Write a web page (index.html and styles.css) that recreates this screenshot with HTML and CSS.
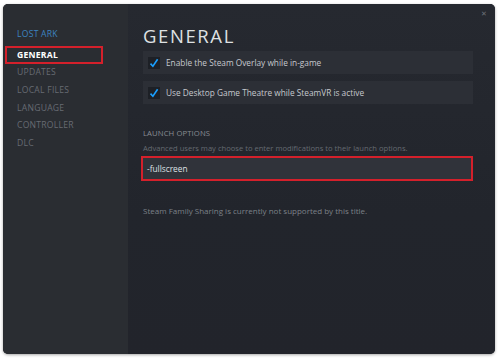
FILE: index.html
```html
<html>
<head>
    <title>Properties</title>
    <meta charset="UTF-8" name="viewport" content="width=device-width, initial-scale=1">
    <link rel="stylesheet" href="styles.css">
</head>

<body>
    <div class="window">
        <div class="sidebar">
            <p class="game">LOST ARK</p>
            <p class="nav active">GENERAL</p>
            <p class="nav">UPDATES</p>
            <p class="nav">LOCAL FILES</p>
            <p class="nav">LANGUAGE</p>
            <p class="nav">CONTROLLER</p>
            <p class="nav">DLC</p>
        </div>
        <div class="main">
            <h1>GENERAL</h1>
            <div class="option">
                <span class="check">
                    <svg width="10" height="10" viewBox="0 0 10 10"><path d="M1.5 5.6 L3.9 8.2 L8.6 1.3" fill="none" stroke="#1a9fff" stroke-width="1.6"/></svg>
                </span>
                Enable the Steam Overlay while in-game
            </div>
            <div class="option">
                <span class="check">
                    <svg width="10" height="10" viewBox="0 0 10 10"><path d="M1.5 5.6 L3.9 8.2 L8.6 1.3" fill="none" stroke="#1a9fff" stroke-width="1.6"/></svg>
                </span>
                Use Desktop Game Theatre while SteamVR is active
            </div>
            <h2>LAUNCH OPTIONS</h2>
            <p class="hint">Advanced users may choose to enter modifications to their launch options.</p>
            <div class="launch">-fullscreen</div>
            <p class="note">Steam Family Sharing is currently not supported by this title.</p>
        </div>
        <span class="close">&#x2715;</span>
    </div>
</body>
</html>
```

FILE: styles.css
```css
html, body {
    margin: 0;
    padding: 0;
    background-color: #ffffff;
    font-family: "Open Sans", "Noto Sans", sans-serif;
}

body {
    padding: 4px 5px 4px 3px;
}

.window {
    position: relative;
    display: flex;
    height: 350px;
    border-radius: 5px;
    overflow: hidden;
    background-color: #24272e;
    box-shadow: 0 1px 3px rgba(0, 0, 0, 0.35);
}

.sidebar {
    width: 125px;
    flex-shrink: 0;
    padding-top: 22px;
    padding-left: 2px;
    box-sizing: border-box;
    background-color: #2a2d32;
}

.sidebar p {
    margin: 0;
    height: 17.8px;
    line-height: 17.8px;
    padding-left: 12px;
    font-size: 8.6px;
    letter-spacing: 0.25px;
    color: #676b72;
}

.sidebar .game {
    height: 18px;
    color: #3d84c0;
    margin-bottom: 2px;
}

.sidebar .active {
    width: 98px;
    height: 18px;
    box-sizing: border-box;
    border: 2px solid #d4202b;
    padding-left: 10px;
    line-height: 14px;
    color: #ffffff;
    font-weight: bold;
}

.main {
    flex: 1;
    padding: 21px 22px 0 15px;
    background: linear-gradient(180deg, #262930 0%, #22252c 60%, #22242b 100%);
}

h1 {
    margin: 0 0 4px 0;
    font-size: 18.5px;
    line-height: 22px;
    font-weight: normal;
    letter-spacing: 1.6px;
    color: #dfe1e3;
}

.option {
    display: flex;
    align-items: center;
    height: 23px;
    margin-bottom: 7px;
    padding-left: 5px;
    background-color: #2c2f36;
    font-size: 8.3px;
    color: #c6c9ce;
}

.check {
    display: flex;
    align-items: center;
    justify-content: center;
    width: 12px;
    height: 12px;
    margin-right: 6px;
    background-color: #1d2026;
}

h2 {
    margin: 24px 0 0 0;
    font-size: 7.7px;
    line-height: 10px;
    font-weight: normal;
    letter-spacing: 0.1px;
    color: #888c93;
}

.hint {
    margin: 5px 0 0 0;
    font-size: 7.6px;
    line-height: 10px;
    color: #656a71;
}

.launch {
    margin: 3px 0 0 -2px;
    height: 25px;
    line-height: 21px;
    padding-left: 4px;
    box-sizing: border-box;
    border: 2px solid #d4202b;
    background-color: #30333a;
    font-size: 8.3px;
    color: #dfe1e4;
}

.note {
    margin: 25px 0 0 0;
    font-size: 8px;
    line-height: 10px;
    color: #7c8188;
}

.close {
    position: absolute;
    top: 5px;
    right: 8px;
    font-size: 7px;
    color: #6d7178;
}
```
